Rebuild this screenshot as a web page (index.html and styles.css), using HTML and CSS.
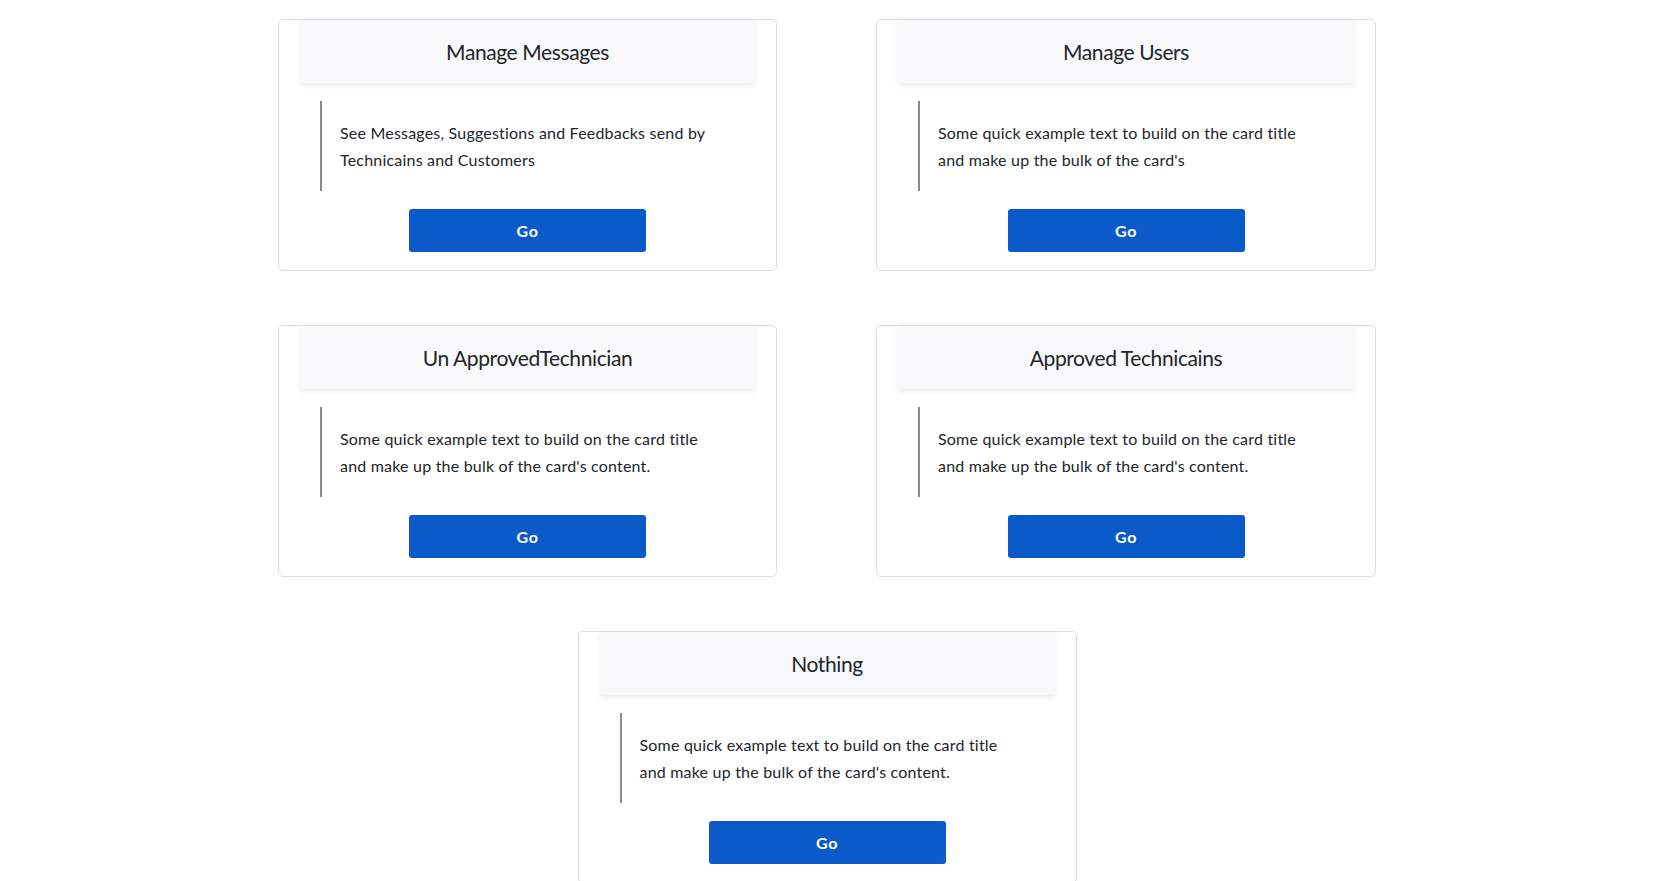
FILE: index.html
```html
<!DOCTYPE html>
<html>
<head>
<meta charset="utf-8">
<link rel="stylesheet" href="styles.css">
</head>
<body>
<main class="grid">
  <section class="card">
    <div class="card-head"><h2>Manage Messages</h2></div>
    <blockquote class="quote"><p>See Messages, Suggestions and Feedbacks send by<br>Technicains and Customers</p></blockquote>
    <button class="go">Go</button>
  </section>
  <section class="card">
    <div class="card-head"><h2>Manage Users</h2></div>
    <blockquote class="quote"><p>Some quick example text to build on the card title<br>and make up the bulk of the card's</p></blockquote>
    <button class="go">Go</button>
  </section>
  <section class="card">
    <div class="card-head"><h2>Un ApprovedTechnician</h2></div>
    <blockquote class="quote"><p>Some quick example text to build on the card title<br>and make up the bulk of the card's content.</p></blockquote>
    <button class="go">Go</button>
  </section>
  <section class="card">
    <div class="card-head"><h2>Approved Technicains</h2></div>
    <blockquote class="quote"><p>Some quick example text to build on the card title<br>and make up the bulk of the card's content.</p></blockquote>
    <button class="go">Go</button>
  </section>
  <section class="card card-center">
    <div class="card-head"><h2>Nothing</h2></div>
    <blockquote class="quote"><p>Some quick example text to build on the card title<br>and make up the bulk of the card's content.</p></blockquote>
    <button class="go">Go</button>
  </section>
</main>
</body>
</html>
```
FILE: styles.css
```css
* { box-sizing: border-box; }
html, body { margin: 0; padding: 0; background: #fff; }
body {
  font-family: "Lato", "Open Sans", sans-serif;
  color: #212529;
  overflow: hidden;
}
.grid {
  display: grid;
  grid-template-columns: 499px 500px;
  column-gap: 99px;
  row-gap: 54px;
  padding: 19px 0 0 278px;
}
.card {
  border: 1px solid #dedede;
  border-radius: 5px;
  padding: 0 21px 18px;
  display: flex;
  flex-direction: column;
  align-items: center;
  background: #fff;
}
.card-center {
  grid-column: 1 / span 2;
  justify-self: center;
  width: 499px;
}
.card-head {
  align-self: stretch;
  height: 63px;
  background: #f8f9fa;
  box-shadow: 0 3px 6px rgba(0, 0, 0, 0.07);
  display: flex;
  align-items: center;
  justify-content: center;
}
.card-head h2 {
  margin: 0;
  font-size: 21px;
  font-weight: 400;
  letter-spacing: -0.4px;
  color: #212529;
  padding-bottom: 1px;
}
.quote {
  align-self: stretch;
  margin: 18px 0 0 20px;
  height: 90px;
  border-left: 2px solid #8a8a8a;
  padding: 18px 0 0 18px;
}
.quote p {
  margin: 0;
  font-size: 16px;
  letter-spacing: 0.2px;
  line-height: 27px;
  color: #212529;
  white-space: nowrap;
}
.go {
  margin-top: 18px;
  width: 237px;
  height: 43px;
  border: none;
  border-radius: 3px;
  background: #0b5ac9;
  color: #fff;
  font-family: "Lato", sans-serif;
  font-weight: 700;
  font-size: 16px;
  letter-spacing: 0.6px;
  padding: 0;
}
```
